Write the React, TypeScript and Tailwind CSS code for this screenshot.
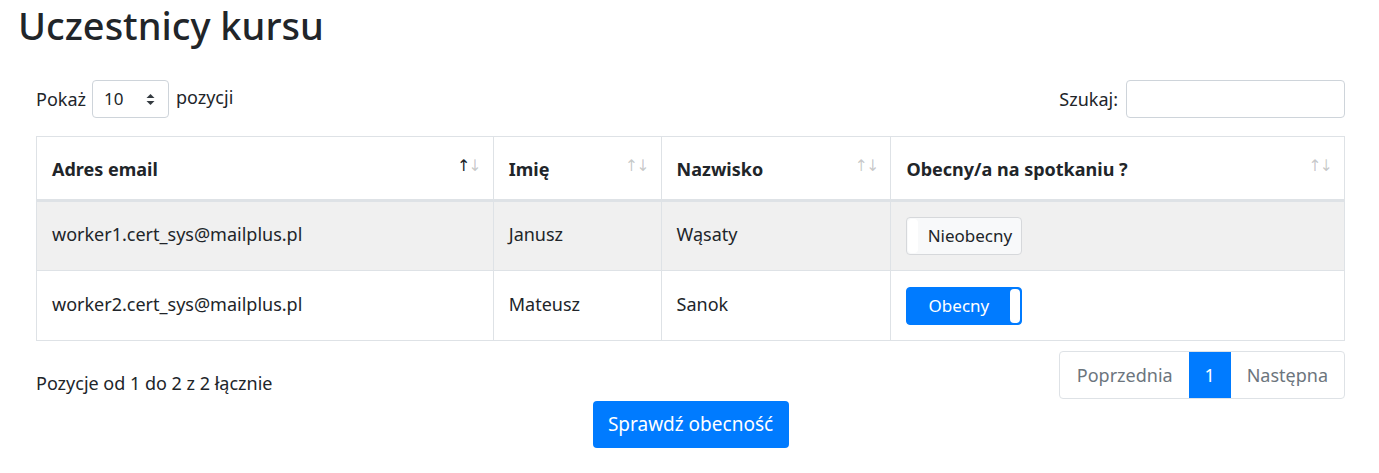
import { useState } from "react";

type Participant = { email: string; first: string; last: string; present: boolean };

const rows: Participant[] = [
  { email: "worker1.cert_sys@mailplus.pl", first: "Janusz", last: "Wąsaty", present: false },
  { email: "worker2.cert_sys@mailplus.pl", first: "Mateusz", last: "Sanok", present: true },
];

function SortIcon({ active }: { active?: boolean }) {
  return (
    <span className="absolute right-[11px] top-[21px] flex font-['DejaVu_Sans',sans-serif] text-[16px] font-normal leading-none">
      <span className={active ? "text-[#212529]" : "text-[#212529]/25"}>↑</span>
      <span className="-ml-[2px] text-[#212529]/25">↓</span>
    </span>
  );
}

function Toggle({ on, onClick }: { on: boolean; onClick: () => void }) {
  return (
    <button
      type="button"
      onClick={onClick}
      className={
        on
          ? "relative flex h-[38px] w-[116px] items-center rounded border border-[#007bff] bg-[#007bff] text-[17px] text-white"
          : "relative flex h-[38px] w-[116px] items-center rounded border border-[#d6d8db] bg-[#f8f9fa] text-[17px] text-[#212529]"
      }
    >
      {on ? (
        <>
          <span className="flex-1 text-center">Obecny</span>
          <span className="mr-px h-[34px] w-[10px] rounded-sm bg-white" />
        </>
      ) : (
        <>
          <span className="ml-px h-[34px] w-[10px] rounded-sm bg-white" />
          <span className="flex-1 text-center">Nieobecny</span>
        </>
      )}
    </button>
  );
}

export default function App() {
  const [present, setPresent] = useState(rows.map((r) => r.present));

  return (
    <div className="h-[473px] w-[1379px] bg-white font-['Noto_Sans',sans-serif] text-[18px] leading-[26px] text-[#212529]">
      <h1 className="pl-[18px] pt-[1px] text-[38px] font-medium leading-[48px]">Uczestnicy kursu</h1>

      <div className="ml-[36px] mr-[34px] mt-[31px] flex items-center justify-between">
        <div className="flex items-center">
          <span>Pokaż</span>
          <div className="relative ml-[6px] mr-[7px] flex h-[38px] w-[77px] items-center rounded border border-[#ced4da] bg-white pl-[11px] text-[17px]">
            <span>10</span>
            <svg className="absolute right-[13px] top-[13px]" width="9" height="11" viewBox="0 0 9 11">
              <path d="M4.5 0 L8.5 4 L0.5 4 Z M4.5 11 L0.5 7 L8.5 7 Z" fill="#343a40" />
            </svg>
          </div>
          <span className="-mt-[4px]">pozycji</span>
        </div>
        <div className="flex items-center">
          <span>Szukaj:</span>
          <input
            type="text"
            className="ml-[8px] h-[38px] w-[219px] rounded border border-[#ced4da] bg-white px-3 outline-none"
          />
        </div>
      </div>

      <div className="mx-[36px] mt-[18px] w-[1309px]">
        <table className="w-full border-collapse border border-[#dee2e6]">
          <colgroup>
            <col className="w-[457px]" />
            <col className="w-[168px]" />
            <col className="w-[230px]" />
            <col className="w-[454px]" />
          </colgroup>
          <thead>
            <tr className="h-[64px] border-b-[3px] border-[#dee2e6]">
              {["Adres email", "Imię", "Nazwisko", "Obecny/a na spotkaniu ?"].map((label, i) => (
                <th
                  key={label}
                  className="relative border-x border-[#dee2e6] pl-[15px] pt-[2px] text-left font-bold"
                >
                  {label}
                  <SortIcon active={i === 0} />
                </th>
              ))}
            </tr>
          </thead>
          <tbody>
            {rows.map((row, i) => (
              <tr key={row.email} className={i % 2 === 0 ? "h-[70px] bg-[#f0f0f0]" : "h-[70px] bg-white"}>
                <td className="border border-[#dee2e6] pb-[4px] pl-[15px]">{row.email}</td>
                <td className="border border-[#dee2e6] pb-[4px] pl-[15px]">{row.first}</td>
                <td className="border border-[#dee2e6] pb-[4px] pl-[15px]">{row.last}</td>
                <td className="border border-[#dee2e6] pl-[15px]">
                  <Toggle
                    on={present[i]}
                    onClick={() => setPresent((p) => p.map((v, j) => (j === i ? !v : v)))}
                  />
                </td>
              </tr>
            ))}
          </tbody>
        </table>

        <div className="mt-[10px] flex items-start justify-between">
          <span className="mt-[19px]">Pozycje od 1 do 2 z 2 łącznie</span>
          <div className="flex h-[48px] overflow-hidden rounded border border-[#dee2e6] text-[#6c757d]">
            <span className="flex items-center pl-[17px] pr-[16px]">Poprzednia</span>
            <span className="flex w-[42px] items-center justify-center bg-[#007bff] text-white">1</span>
            <span className="flex items-center px-[16px]">Następna</span>
          </div>
        </div>
      </div>

      <div className="mt-[2px] flex justify-center pl-[2px]">
        <button
          type="button"
          className="h-[47px] w-[196px] rounded bg-[#007bff] pb-[2px] text-[19px] text-white"
        >
          Sprawdź obecność
        </button>
      </div>
    </div>
  );
}
